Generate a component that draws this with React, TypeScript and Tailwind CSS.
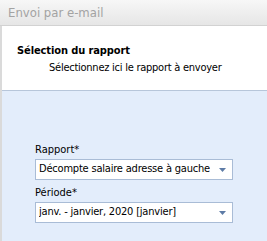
function Select({ value }: { value: string }) {
  return (
    <div className="flex h-[21px] w-[198px] items-center justify-between border border-[#a9bcd6] bg-white pl-[3px] pr-[6px]">
      <span className="truncate text-[11px] tracking-[-0.2px] text-black">{value}</span>
      <svg width="7" height="4" viewBox="0 0 7 4" className="shrink-0">
        <path d="M0 0h7L3.5 4z" fill="#5d7ba6" />
      </svg>
    </div>
  )
}

export default function App() {
  return (
    <div className="flex h-[241px] w-[267px] flex-col overflow-hidden font-['DejaVu_Sans_Condensed','Liberation_Sans',sans-serif]">
      <div className="flex h-[26px] shrink-0 items-center border-b border-[#d2d2d2] bg-gradient-to-b from-[#f7f7f7] to-[#e6e6e6] pl-[8px] text-[13px] text-[#a3a3a3]">
        Envoi par e-mail
      </div>
      <div className="flex flex-1 border-l-2 border-[#dadada]">
        <div className="flex flex-1 flex-col">
          <div className="h-[65px] shrink-0 border-b border-[#b7c6da] bg-white pl-[15px] pt-[18px]">
            <div className="text-[11px] font-bold leading-[14px] tracking-[-0.1px] text-black">Sélection du rapport</div>
            <div className="mt-[3px] pl-[32px] text-[11px] leading-[14px] tracking-[-0.25px] text-black">
              Sélectionnez ici le rapport à envoyer
            </div>
          </div>
          <div className="flex-1 bg-[#e3edfb] pl-[33px] pt-[52px]">
            <div className="text-[11px] leading-[14px] text-black">Rapport*</div>
            <div className="mt-[2px]">
              <Select value="Décompte salaire adresse à gauche" />
            </div>
            <div className="mt-[6px] text-[11px] leading-[14px] text-black">Période*</div>
            <div className="mt-[2px]">
              <Select value="janv. - janvier, 2020 [janvier]" />
            </div>
          </div>
        </div>
      </div>
    </div>
  )
}
